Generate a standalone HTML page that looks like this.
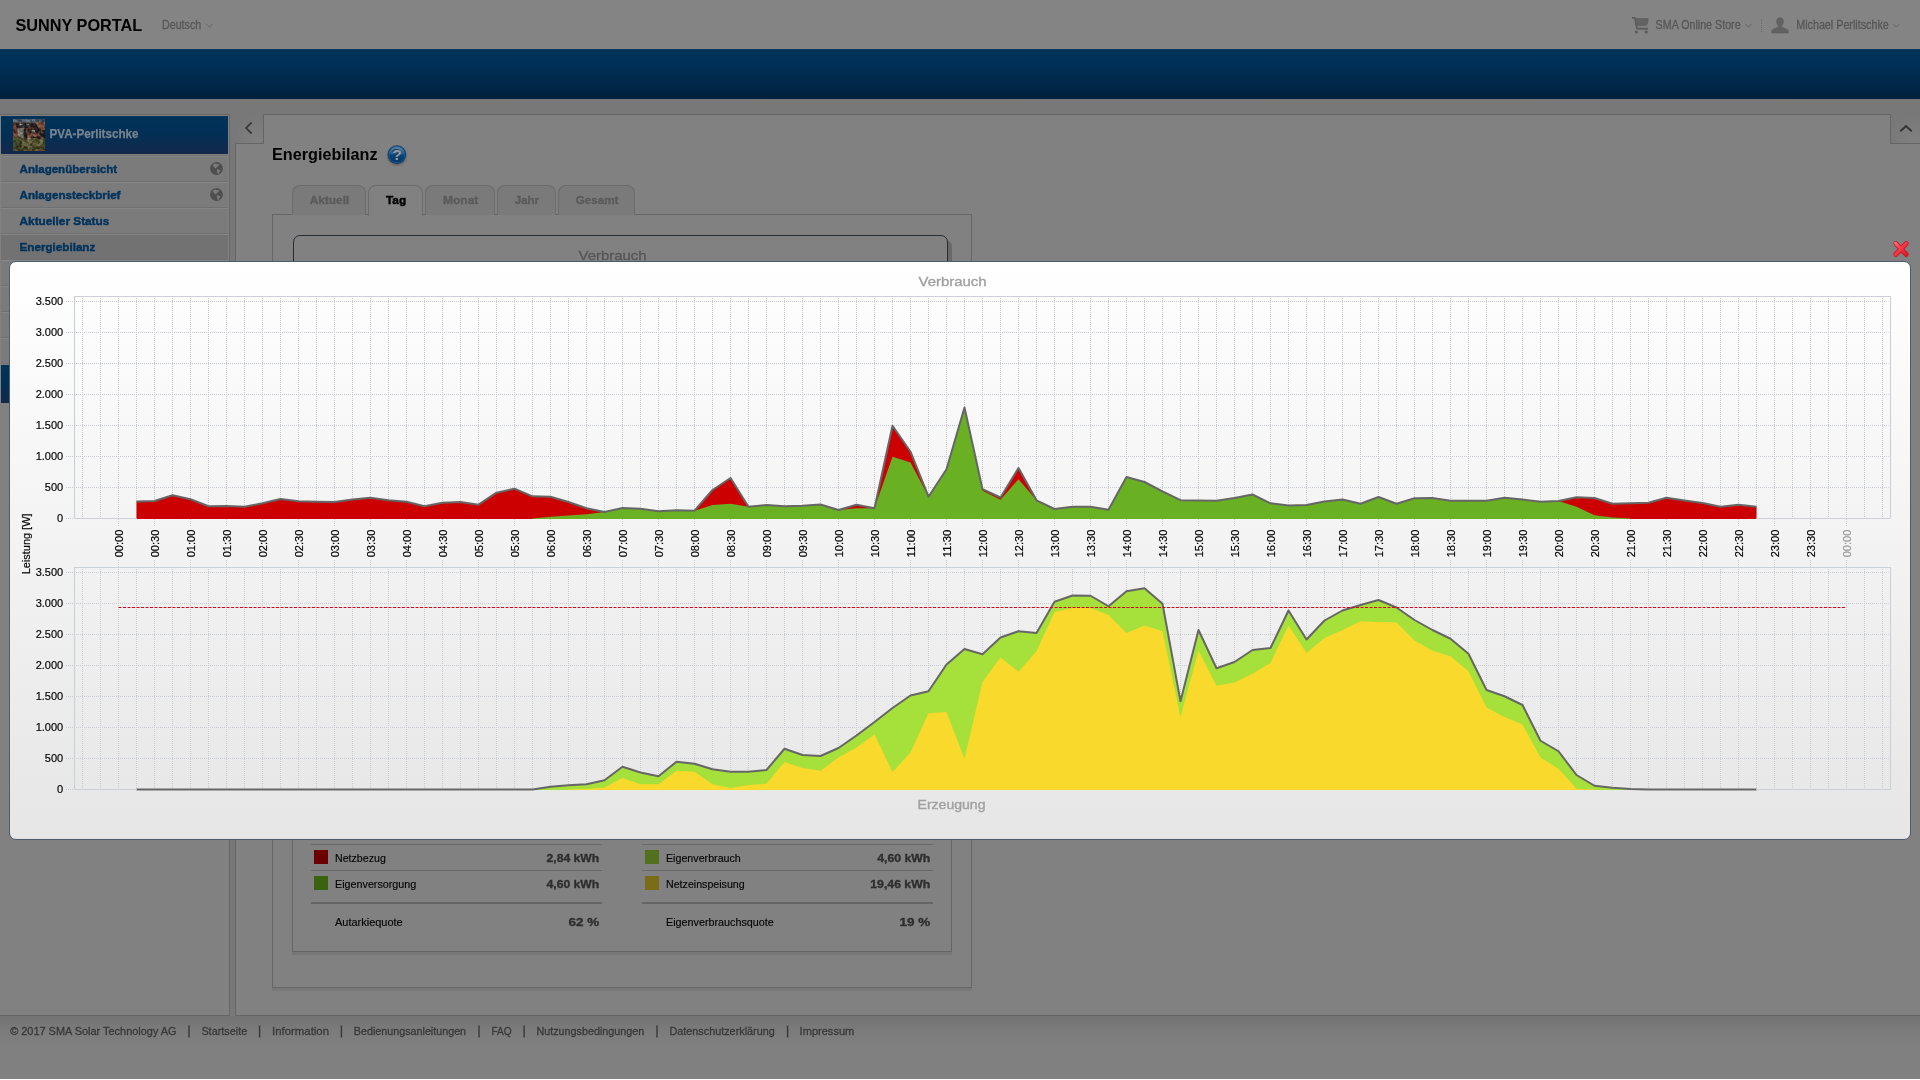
<!DOCTYPE html>
<html lang="de">
<head>
<meta charset="utf-8">
<title>Sunny Portal - Energiebilanz</title>
<style>
*{box-sizing:border-box;margin:0;padding:0}
html,body{width:1920px;height:1080px;overflow:hidden}
body{background:#787878;font-family:"Liberation Sans",sans-serif;font-size:12px;color:#000;position:relative}
.abs{position:absolute}
#hdr{left:0;top:0;width:1920px;height:49px;background:#848484}
#bar{left:0;top:49px;width:1920px;height:50px;background:linear-gradient(#00345b 0%,#003057 30%,#00213e 100%)}
#band{left:0;top:99px;width:1920px;height:15px;background:#787878}
#side{left:0;top:114px;width:230px;height:902px;background:#818181;border:1px solid #676767;border-left:none}
.sh{left:1px;width:227px;height:38px;background:linear-gradient(#003359 0%,#022f55 45%,#13294b 100%)}
.mi{left:1px;width:227px;height:26px;border-top:1px solid #868686;border-bottom:1px solid #707070;background:#7b7b7b}
.mi.sel{background:#727272}
#main{left:236px;top:114px;width:1690px;height:902px;background:#818181;border:1px solid #6b6b6b}
.tab{top:185px;height:30px;border:1px solid #6c6c6c;border-bottom:none;border-radius:8px 8px 0 0;background:#7a7a7a}
.tab.on{background:#818181;height:31px}
#box{left:272px;top:214px;width:700px;height:774px;border:1px solid #666;background:#818181;box-shadow:0 3px 0 #787878}
#inner{left:293px;top:235px;width:655px;height:60px;border:1.5px solid #262c32;border-radius:7px 7px 0 0;background:#818181}
#inner2{left:292px;top:800px;width:660px;height:152px;border:1px solid #666;border-top:none;box-shadow:0 3px 0 #777}
.ln{height:1px;background:#6a6a6a}
.ln2{height:2px;background:#656565}
.sq{width:14px;height:14px}
#foot{left:0;top:1016px;width:1920px;height:63px;background:linear-gradient(#737373 0,#7b7b7b 14px,#808080 30px)}
#wl{left:0;top:1079px;width:1920px;height:1px;background:#fff}
#modal{left:9px;top:261px;width:1902px;height:579px;border:1px solid #4f5d6b;border-radius:7px;background:linear-gradient(#ffffff,#e6e6e6)}
svg text{font-family:"Liberation Sans",sans-serif}
svg.txt{will-change:transform}
.grid{fill:none;stroke:#c7cdd3;stroke-width:1;stroke-dasharray:1,1}
.tk{font-size:11px;fill:#000;stroke:#000;stroke-width:0.18}
.tk.g{fill:#999;stroke:#999}
</style>
</head>
<body>
<div id="hdr" class="abs"></div>
<div id="bar" class="abs"></div>
<div id="band" class="abs"></div>

<!-- sidebar -->
<div id="side" class="abs"></div>
<div class="abs sh" style="top:116px"></div>
<svg class="abs" style="left:13px;top:119px" width="32" height="32" viewBox="0 0 32 32"><defs><filter id="bl" x="-5%" y="-5%" width="110%" height="110%"><feGaussianBlur stdDeviation="0.55"/></filter><clipPath id="tc"><rect width="32" height="32"/></clipPath><filter id="nz" x="0" y="0" width="100%" height="100%"><feTurbulence type="fractalNoise" baseFrequency="0.28" numOctaves="2" seed="7"/><feColorMatrix type="matrix" values="0 0 0 0 0  0 0 0 0 0  0 0 0 0 0  1.6 1.6 0 0 -1.25"/></filter><filter id="nz2" x="0" y="0" width="100%" height="100%"><feTurbulence type="fractalNoise" baseFrequency="0.33" numOctaves="2" seed="21"/><feColorMatrix type="matrix" values="0 0 0 0 0.75  0 0 0 0 0.72  0 0 0 0 0.55  0 1.7 1.7 0 -1.4"/></filter></defs>
<g clip-path="url(#tc)"><g filter="url(#bl)">
<rect x="-2" y="-2" width="36" height="36" fill="#6b3526"/>
<rect x="-2" y="-2" width="36" height="5.2" fill="#6b7e92"/>
<rect x="-2" y="2.8" width="36" height="1.3" fill="#5b4a44"/>
<path d="M22,4H34V13L28,15Z" fill="#78402b"/>
<path d="M-1,4H3L4,19H-1Z" fill="#733927"/>
<path d="M2.5,4H22.5L29.5,16L26,18L19.5,8.5L4,9.5Z" fill="#1c191c"/>
<path d="M6.5,4.8H9.5V6.3H6.5ZM13,4.8H16V5.8H13Z" fill="#9a9a9c"/>
<path d="M4.5,9.5L11,9L12,19H5.5Z" fill="#858680"/>
<path d="M6,10.5L10,10.2L10.4,13L6.3,13.4Z" fill="#6f7270"/>
<path d="M10.5,10L12.5,9.5L14,19L10.5,19.5Z" fill="#121214"/>
<path d="M13.5,9.5L20,9L23,14L25,17.5L14.5,18.5Z" fill="#553024"/>
<path d="M14.5,10L18.5,10L19.5,14L15,14.5Z" fill="#2c1612"/>
<path d="M18.8,11H22V13.2H19.4Z" fill="#a0a09e"/>
<path d="M14,15.5L26,14.5L27,18L14.5,19Z" fill="#70392a"/>
<path d="M29,11H34V19H30Z" fill="#180e0e"/>
<path d="M20,17.5L27,17L28,20L20,20Z" fill="#2a1a14"/>
<path d="M-2,19L6,18L13,19.5L20,19L27,20L34,19V34H-2Z" fill="#4a4a24"/>
<path d="M-2,22L5,20.5L10,23L6,27L-2,26Z" fill="#3c4020"/>
<path d="M9,21L16,20L21,23L19,28L11,27Z" fill="#66623a"/>
<path d="M14,19.2L22,19L22,20.2L14,20.4Z" fill="#8a8468"/>
<path d="M21,21L29,20.5L34,23V28L24,28Z" fill="#55522a"/>
<path d="M-2,27L8,26L16,29L26,27L34,29V34H-2Z" fill="#3e3e1e"/>
<path d="M14,31L34,29.5V34H10Z" fill="#6a4a22"/>
</g><g opacity="0.55"><rect width="32" height="32" filter="url(#nz)"/></g><g opacity="0.3"><rect y="3" width="32" height="29" filter="url(#nz2)"/></g></g></svg>
<div class="abs" style="left:1px;top:155px;width:227px;height:1px;background:#707070"></div>
<div class="abs mi" style="top:156px"></div>
<div class="abs mi" style="top:182px"></div>
<div class="abs mi" style="top:208px"></div>
<div class="abs mi sel" style="top:234px"></div>
<div class="abs mi" style="top:260px"></div>
<div class="abs mi" style="top:286px"></div>
<div class="abs mi" style="top:312px"></div>
<div class="abs mi" style="top:338px"></div>
<div class="abs sh" style="top:365px"></div>
<svg class="abs" style="left:210px;top:162px" width="13" height="13" viewBox="0 0 13 13"><circle cx="6.5" cy="6.5" r="6.4" fill="#4e4e4e"/><path d="M3.2,2.3C4.6,1.2 6.2,1.5 6.9,2.2C8,1.6 9.2,1.9 9.6,2.6C8.8,3.6 7.8,4.2 7,5C6.4,5.8 5.9,6.5 5.4,6.3C4.6,6 4.4,5 3.6,4.6C3,4.2 2.8,3.2 3.2,2.3ZM6.9,7.2C8,7 9.6,7.8 10.3,8.6C10.1,9.8 9.2,10.6 8.6,11.4C8.2,12 7.8,12.2 7.6,11.4C7.4,10.2 6.6,8.4 6.9,7.2ZM11,6.2C11.6,6.4 11.9,7 11.8,7.6C11.3,7.4 11,6.8 11,6.2Z" fill="#7b7b7b"/></svg>
<svg class="abs" style="left:210px;top:188px" width="13" height="13" viewBox="0 0 13 13"><circle cx="6.5" cy="6.5" r="6.4" fill="#4e4e4e"/><path d="M3.2,2.3C4.6,1.2 6.2,1.5 6.9,2.2C8,1.6 9.2,1.9 9.6,2.6C8.8,3.6 7.8,4.2 7,5C6.4,5.8 5.9,6.5 5.4,6.3C4.6,6 4.4,5 3.6,4.6C3,4.2 2.8,3.2 3.2,2.3ZM6.9,7.2C8,7 9.6,7.8 10.3,8.6C10.1,9.8 9.2,10.6 8.6,11.4C8.2,12 7.8,12.2 7.6,11.4C7.4,10.2 6.6,8.4 6.9,7.2ZM11,6.2C11.6,6.4 11.9,7 11.8,7.6C11.3,7.4 11,6.8 11,6.2Z" fill="#7b7b7b"/></svg>

<!-- main -->
<svg class="abs" style="left:0;top:0" width="1920" height="1080" viewBox="0 0 1920 1080"><defs><radialGradient id="ng" cx="0.8" cy="0.9" r="0.9"><stop offset="0" stop-color="#808080"/><stop offset="1" stop-color="#787878"/></radialGradient></defs>
<rect x="236" y="115" width="27" height="28" fill="url(#ng)"/><rect x="1891" y="115" width="29" height="28" fill="url(#ng)"/>
<path d="M263.5,114.5H1890.5V143.5H1925V1015.5H235.5V143.5H263.5Z" fill="#818181" stroke="#656565" stroke-width="1"/></svg>
<svg class="abs" style="left:243px;top:120px" width="12" height="16" viewBox="0 0 12 16"><path d="M8.6,2.4 L3.2,8 L8.6,13.6" fill="none" stroke="#383838" stroke-width="1.8"/></svg>
<svg class="abs" style="left:1899px;top:123px" width="14" height="10" viewBox="0 0 14 10"><path d="M1.3,8.2 L7,3 L12.7,8.2" fill="none" stroke="#333" stroke-width="1.9"/></svg>

<svg class="abs" style="left:385px;top:143px" width="24" height="25" viewBox="0 0 24 25"><defs><linearGradient id="hg" x1="0" y1="0" x2="0" y2="1"><stop offset="0" stop-color="#5c87a6"/><stop offset="0.48" stop-color="#1d5888"/><stop offset="0.52" stop-color="#04437a"/><stop offset="1" stop-color="#003768"/></linearGradient><filter id="hb"><feGaussianBlur stdDeviation="0.9"/></filter></defs>
<ellipse cx="11.9" cy="13.2" rx="9.2" ry="9" fill="#5a5a5a" filter="url(#hb)"/>
<circle cx="11.9" cy="11.6" r="9.3" fill="#0a3c72"/><circle cx="11.9" cy="11.6" r="8.1" fill="url(#hg)" stroke="#2c5e90" stroke-width="0.6"/>
<text x="11.6" y="16.9" text-anchor="middle" font-size="15.5" font-weight="bold" fill="#2a3848" transform="translate(-0.3,-0.6)">?</text>
<text x="11.9" y="17.3" text-anchor="middle" font-size="15.5" font-weight="bold" fill="#949aa2">?</text></svg>

<div id="box" class="abs"></div>
<div class="abs tab" style="left:292px;width:74px"></div>
<div class="abs tab on" style="left:368px;width:55px"></div>
<div class="abs tab" style="left:425px;width:70px"></div>
<div class="abs tab" style="left:497px;width:59px"></div>
<div class="abs tab" style="left:558px;width:77px"></div>
<div class="abs" style="left:948px;top:240px;width:4px;height:30px;background:#696969;clip-path:polygon(0 0,100% 4px,100% 100%,0 100%)"></div>
<div id="inner" class="abs"></div>
<div id="inner2" class="abs"></div>

<div class="abs ln" style="left:311px;top:844px;width:291px"></div>
<div class="abs ln" style="left:311px;top:870px;width:291px"></div>
<div class="abs ln2" style="left:311px;top:902px;width:291px"></div>
<div class="abs ln" style="left:642px;top:844px;width:291px"></div>
<div class="abs ln" style="left:642px;top:870px;width:291px"></div>
<div class="abs ln2" style="left:642px;top:902px;width:291px"></div>
<div class="abs sq" style="left:314px;top:850px;background:#6c0000"></div>
<div class="abs sq" style="left:314px;top:876px;background:#3a6310"></div>
<div class="abs sq" style="left:645px;top:850px;background:#52701d"></div>
<div class="abs sq" style="left:645px;top:876px;background:#7d6c17"></div>

<div id="foot" class="abs"></div>
<div id="wl" class="abs"></div>

<!-- header icons -->
<svg class="abs" style="left:204px;top:21px" width="12" height="9" viewBox="0 0 12 9"><path d="M2.2,2.8 L5.4,6.2 L8.6,2.8" fill="none" stroke="#666" stroke-width="1"/></svg>
<svg class="abs" style="left:1631px;top:15px" width="19" height="20" viewBox="0 0 19 20"><path d="M1,2.9H3.9L6,14" fill="none" stroke="#5b5b5b" stroke-width="1.7" stroke-linejoin="round"/><path d="M4.6,3.6H17.2L16.9,7.2Q16.4,10 14.6,10.6H6.2Z" fill="#626262" stroke="#5b5b5b" stroke-width="0.6"/><path d="M5.8,13.7H17.1" fill="none" stroke="#5b5b5b" stroke-width="1.9"/><circle cx="5.3" cy="17" r="1.55" fill="#5b5b5b"/><circle cx="15.2" cy="17" r="1.55" fill="#5b5b5b"/></svg>
<svg class="abs" style="left:1743px;top:21px" width="12" height="9" viewBox="0 0 12 9"><path d="M2.2,2.8 L5.4,6.2 L8.6,2.8" fill="none" stroke="#666" stroke-width="1"/></svg>
<div class="abs" style="left:1761px;top:19px;width:1px;height:13px;border-left:1px dotted #6a6a6a"></div>
<svg class="abs" style="left:1771px;top:17px" width="18" height="17" viewBox="0 0 18 17"><path d="M9,0.8C11.2,0.8 12.4,2.4 12.4,4.6C12.4,6.6 11.6,8 10.8,8.8V10.2C13,11 16.2,11.6 17.2,13.6V16H0.8V13.6C1.8,11.6 5,11 7.2,10.2V8.8C6.4,8 5.6,6.6 5.6,4.6C5.6,2.4 6.8,0.8 9,0.8Z" fill="#626262" stroke="#5a5a5a" stroke-width="0.5"/></svg>
<svg class="abs" style="left:1891px;top:21px" width="12" height="9" viewBox="0 0 12 9"><path d="M2.2,2.8 L5.4,6.2 L8.6,2.8" fill="none" stroke="#666" stroke-width="1"/></svg>

<svg class="abs txt" style="left:0;top:0" width="1920" height="1080" viewBox="0 0 1920 1080">
<text x="15.40" y="31.00" textLength="126.90" lengthAdjust="spacingAndGlyphs" font-size="16.5" font-weight="bold" fill="#000">SUNNY PORTAL</text>
<text x="162.00" y="29.00" textLength="39.20" lengthAdjust="spacingAndGlyphs" font-size="12" font-weight="normal" fill="#575757" stroke="#575757" stroke-width="0.3">Deutsch</text>
<text x="1655.60" y="29.00" textLength="85.00" lengthAdjust="spacingAndGlyphs" font-size="12" font-weight="normal" fill="#575757" stroke="#575757" stroke-width="0.3">SMA Online Store</text>
<text x="1796.20" y="29.00" textLength="92.60" lengthAdjust="spacingAndGlyphs" font-size="12" font-weight="normal" fill="#575757" stroke="#575757" stroke-width="0.3">Michael Perlitschke</text>
<text x="49.60" y="137.80" textLength="88.80" lengthAdjust="spacingAndGlyphs" font-size="12" font-weight="bold" fill="#78848f" stroke="#78848f" stroke-width="0.25">PVA-Perlitschke</text>
<text x="19.60" y="172.50" textLength="97.60" lengthAdjust="spacingAndGlyphs" font-size="11.3" font-weight="bold" fill="#00335d" stroke="#00335d" stroke-width="0.45">Anlagenübersicht</text>
<text x="19.60" y="198.50" textLength="100.90" lengthAdjust="spacingAndGlyphs" font-size="11.3" font-weight="bold" fill="#00335d" stroke="#00335d" stroke-width="0.45">Anlagensteckbrief</text>
<text x="19.60" y="224.50" textLength="89.70" lengthAdjust="spacingAndGlyphs" font-size="11.3" font-weight="bold" fill="#00335d" stroke="#00335d" stroke-width="0.45">Aktueller Status</text>
<text x="19.60" y="250.50" textLength="75.70" lengthAdjust="spacingAndGlyphs" font-size="11.3" font-weight="bold" fill="#00335d" stroke="#00335d" stroke-width="0.45">Energiebilanz</text>
<text x="272.00" y="160.00" textLength="105.50" lengthAdjust="spacingAndGlyphs" font-size="16.2" font-weight="bold" fill="#000">Energiebilanz</text>
<text x="309.70" y="204.00" textLength="39.60" lengthAdjust="spacingAndGlyphs" font-size="11.3" font-weight="bold" fill="#5a5a5a" stroke="#5a5a5a" stroke-width="0.3">Aktuell</text>
<text x="386.00" y="204.00" textLength="20.20" lengthAdjust="spacingAndGlyphs" font-size="11.3" font-weight="bold" fill="#000" stroke="#000" stroke-width="0.4">Tag</text>
<text x="443.00" y="204.00" textLength="35.30" lengthAdjust="spacingAndGlyphs" font-size="11.3" font-weight="bold" fill="#5a5a5a" stroke="#5a5a5a" stroke-width="0.3">Monat</text>
<text x="514.70" y="204.00" textLength="24.30" lengthAdjust="spacingAndGlyphs" font-size="11.3" font-weight="bold" fill="#5a5a5a" stroke="#5a5a5a" stroke-width="0.3">Jahr</text>
<text x="575.70" y="204.00" textLength="42.70" lengthAdjust="spacingAndGlyphs" font-size="11.3" font-weight="bold" fill="#5a5a5a" stroke="#5a5a5a" stroke-width="0.3">Gesamt</text>
<text x="578.50" y="259.80" textLength="68.00" lengthAdjust="spacingAndGlyphs" font-size="13" font-weight="normal" fill="#565656" stroke="#565656" stroke-width="0.3">Verbrauch</text>
<text x="335.00" y="862.00" textLength="50.80" lengthAdjust="spacingAndGlyphs" font-size="11.5" font-weight="normal" fill="#050505" stroke="#050505" stroke-width="0.15">Netzbezug</text>
<text x="546.50" y="862.00" textLength="52.80" lengthAdjust="spacingAndGlyphs" font-size="11.5" font-weight="bold" fill="#2e2e2e" stroke="#2e2e2e" stroke-width="0.35">2,84 kWh</text>
<text x="335.00" y="888.00" textLength="81.30" lengthAdjust="spacingAndGlyphs" font-size="11.5" font-weight="normal" fill="#050505" stroke="#050505" stroke-width="0.15">Eigenversorgung</text>
<text x="546.50" y="888.00" textLength="52.80" lengthAdjust="spacingAndGlyphs" font-size="11.5" font-weight="bold" fill="#2e2e2e" stroke="#2e2e2e" stroke-width="0.35">4,60 kWh</text>
<text x="335.00" y="926.00" textLength="67.70" lengthAdjust="spacingAndGlyphs" font-size="11.5" font-weight="normal" fill="#050505" stroke="#050505" stroke-width="0.15">Autarkiequote</text>
<text x="568.60" y="926.00" textLength="30.70" lengthAdjust="spacingAndGlyphs" font-size="11.5" font-weight="bold" fill="#2e2e2e" stroke="#2e2e2e" stroke-width="0.35">62 %</text>
<text x="666.00" y="862.00" textLength="74.80" lengthAdjust="spacingAndGlyphs" font-size="11.5" font-weight="normal" fill="#050505" stroke="#050505" stroke-width="0.15">Eigenverbrauch</text>
<text x="877.20" y="862.00" textLength="53.00" lengthAdjust="spacingAndGlyphs" font-size="11.5" font-weight="bold" fill="#2e2e2e" stroke="#2e2e2e" stroke-width="0.35">4,60 kWh</text>
<text x="666.00" y="888.00" textLength="78.70" lengthAdjust="spacingAndGlyphs" font-size="11.5" font-weight="normal" fill="#050505" stroke="#050505" stroke-width="0.15">Netzeinspeisung</text>
<text x="870.30" y="888.00" textLength="59.90" lengthAdjust="spacingAndGlyphs" font-size="11.5" font-weight="bold" fill="#2e2e2e" stroke="#2e2e2e" stroke-width="0.35">19,46 kWh</text>
<text x="666.00" y="926.00" textLength="107.80" lengthAdjust="spacingAndGlyphs" font-size="11.5" font-weight="normal" fill="#050505" stroke="#050505" stroke-width="0.15">Eigenverbrauchsquote</text>
<text x="899.50" y="926.00" textLength="30.70" lengthAdjust="spacingAndGlyphs" font-size="11.5" font-weight="bold" fill="#2e2e2e" stroke="#2e2e2e" stroke-width="0.35">19 %</text>
<text x="10.20" y="1035.00" textLength="166.40" lengthAdjust="spacingAndGlyphs" font-size="11.5" font-weight="normal" fill="#383838" stroke="#383838" stroke-width="0.3">© 2017 SMA Solar Technology AG</text>
<text x="201.40" y="1035.00" textLength="45.80" lengthAdjust="spacingAndGlyphs" font-size="11.5" font-weight="normal" fill="#383838" stroke="#383838" stroke-width="0.3">Startseite</text>
<text x="272.00" y="1035.00" textLength="57.00" lengthAdjust="spacingAndGlyphs" font-size="11.5" font-weight="normal" fill="#383838" stroke="#383838" stroke-width="0.3">Information</text>
<text x="353.80" y="1035.00" textLength="112.30" lengthAdjust="spacingAndGlyphs" font-size="11.5" font-weight="normal" fill="#383838" stroke="#383838" stroke-width="0.3">Bedienungsanleitungen</text>
<text x="491.40" y="1035.00" textLength="20.30" lengthAdjust="spacingAndGlyphs" font-size="11.5" font-weight="normal" fill="#383838" stroke="#383838" stroke-width="0.3">FAQ</text>
<text x="536.50" y="1035.00" textLength="107.70" lengthAdjust="spacingAndGlyphs" font-size="11.5" font-weight="normal" fill="#383838" stroke="#383838" stroke-width="0.3">Nutzungsbedingungen</text>
<text x="669.40" y="1035.00" textLength="105.40" lengthAdjust="spacingAndGlyphs" font-size="11.5" font-weight="normal" fill="#383838" stroke="#383838" stroke-width="0.3">Datenschutzerklärung</text>
<text x="799.60" y="1035.00" textLength="54.70" lengthAdjust="spacingAndGlyphs" font-size="11.5" font-weight="normal" fill="#383838" stroke="#383838" stroke-width="0.3">Impressum</text>
<path d="M189.0,1025.5V1037.5" stroke="#383838" stroke-width="1.4" fill="none"/>
<path d="M259.6,1025.5V1037.5" stroke="#383838" stroke-width="1.4" fill="none"/>
<path d="M341.4,1025.5V1037.5" stroke="#383838" stroke-width="1.4" fill="none"/>
<path d="M479.0,1025.5V1037.5" stroke="#383838" stroke-width="1.4" fill="none"/>
<path d="M524.1,1025.5V1037.5" stroke="#383838" stroke-width="1.4" fill="none"/>
<path d="M657.0,1025.5V1037.5" stroke="#383838" stroke-width="1.4" fill="none"/>
<path d="M787.6,1025.5V1037.5" stroke="#383838" stroke-width="1.4" fill="none"/>
</svg>

<!-- modal -->
<div id="modal" class="abs"></div>
<svg class="abs txt" style="left:0;top:0" width="1920" height="1080" viewBox="0 0 1920 1080">
<path d="M82.5,298.0V518.5M100.5,298.0V518.5M118.5,298.0V518.5M136.5,298.0V518.5M154.5,298.0V518.5M172.5,298.0V518.5M190.5,298.0V518.5M208.5,298.0V518.5M226.5,298.0V518.5M244.5,298.0V518.5M262.5,298.0V518.5M280.5,298.0V518.5M298.5,298.0V518.5M316.5,298.0V518.5M334.5,298.0V518.5M352.5,298.0V518.5M370.5,298.0V518.5M388.5,298.0V518.5M406.5,298.0V518.5M424.5,298.0V518.5M442.5,298.0V518.5M460.5,298.0V518.5M478.5,298.0V518.5M496.5,298.0V518.5M514.5,298.0V518.5M532.5,298.0V518.5M550.5,298.0V518.5M568.5,298.0V518.5M586.5,298.0V518.5M604.5,298.0V518.5M622.5,298.0V518.5M640.5,298.0V518.5M658.5,298.0V518.5M676.5,298.0V518.5M694.5,298.0V518.5M712.5,298.0V518.5M730.5,298.0V518.5M748.5,298.0V518.5M766.5,298.0V518.5M784.5,298.0V518.5M802.5,298.0V518.5M820.5,298.0V518.5M838.5,298.0V518.5M856.5,298.0V518.5M874.5,298.0V518.5M892.5,298.0V518.5M910.5,298.0V518.5M928.5,298.0V518.5M946.5,298.0V518.5M964.5,298.0V518.5M982.5,298.0V518.5M1000.5,298.0V518.5M1018.5,298.0V518.5M1036.5,298.0V518.5M1054.5,298.0V518.5M1072.5,298.0V518.5M1090.5,298.0V518.5M1108.5,298.0V518.5M1126.5,298.0V518.5M1144.5,298.0V518.5M1162.5,298.0V518.5M1180.5,298.0V518.5M1198.5,298.0V518.5M1216.5,298.0V518.5M1234.5,298.0V518.5M1252.5,298.0V518.5M1270.5,298.0V518.5M1288.5,298.0V518.5M1306.5,298.0V518.5M1324.5,298.0V518.5M1342.5,298.0V518.5M1360.5,298.0V518.5M1378.5,298.0V518.5M1396.5,298.0V518.5M1414.5,298.0V518.5M1432.5,298.0V518.5M1450.5,298.0V518.5M1468.5,298.0V518.5M1486.5,298.0V518.5M1504.5,298.0V518.5M1522.5,298.0V518.5M1540.5,298.0V518.5M1558.5,298.0V518.5M1576.5,298.0V518.5M1594.5,298.0V518.5M1612.5,298.0V518.5M1630.5,298.0V518.5M1648.5,298.0V518.5M1666.5,298.0V518.5M1684.5,298.0V518.5M1702.5,298.0V518.5M1720.5,298.0V518.5M1738.5,298.0V518.5M1756.5,298.0V518.5M1774.5,298.0V518.5M1792.5,298.0V518.5M1810.5,298.0V518.5M1828.5,298.0V518.5M1846.5,298.0V518.5M1864.5,298.0V518.5M1882.5,298.0V518.5" class="grid"/>
<path d="M66,487.5H73M76,487.5H1888.5M66,456.5H73M76,456.5H1888.5M66,425.5H73M76,425.5H1888.5M66,394.5H73M76,394.5H1888.5M66,363.5H73M76,363.5H1888.5M66,332.5H73M76,332.5H1888.5M66,301.5H73M76,301.5H1888.5" class="grid"/>
<path d="M66,518.5H73" class="grid"/>
<path d="M82.5,569.0V789.5M100.5,569.0V789.5M118.5,569.0V789.5M136.5,569.0V789.5M154.5,569.0V789.5M172.5,569.0V789.5M190.5,569.0V789.5M208.5,569.0V789.5M226.5,569.0V789.5M244.5,569.0V789.5M262.5,569.0V789.5M280.5,569.0V789.5M298.5,569.0V789.5M316.5,569.0V789.5M334.5,569.0V789.5M352.5,569.0V789.5M370.5,569.0V789.5M388.5,569.0V789.5M406.5,569.0V789.5M424.5,569.0V789.5M442.5,569.0V789.5M460.5,569.0V789.5M478.5,569.0V789.5M496.5,569.0V789.5M514.5,569.0V789.5M532.5,569.0V789.5M550.5,569.0V789.5M568.5,569.0V789.5M586.5,569.0V789.5M604.5,569.0V789.5M622.5,569.0V789.5M640.5,569.0V789.5M658.5,569.0V789.5M676.5,569.0V789.5M694.5,569.0V789.5M712.5,569.0V789.5M730.5,569.0V789.5M748.5,569.0V789.5M766.5,569.0V789.5M784.5,569.0V789.5M802.5,569.0V789.5M820.5,569.0V789.5M838.5,569.0V789.5M856.5,569.0V789.5M874.5,569.0V789.5M892.5,569.0V789.5M910.5,569.0V789.5M928.5,569.0V789.5M946.5,569.0V789.5M964.5,569.0V789.5M982.5,569.0V789.5M1000.5,569.0V789.5M1018.5,569.0V789.5M1036.5,569.0V789.5M1054.5,569.0V789.5M1072.5,569.0V789.5M1090.5,569.0V789.5M1108.5,569.0V789.5M1126.5,569.0V789.5M1144.5,569.0V789.5M1162.5,569.0V789.5M1180.5,569.0V789.5M1198.5,569.0V789.5M1216.5,569.0V789.5M1234.5,569.0V789.5M1252.5,569.0V789.5M1270.5,569.0V789.5M1288.5,569.0V789.5M1306.5,569.0V789.5M1324.5,569.0V789.5M1342.5,569.0V789.5M1360.5,569.0V789.5M1378.5,569.0V789.5M1396.5,569.0V789.5M1414.5,569.0V789.5M1432.5,569.0V789.5M1450.5,569.0V789.5M1468.5,569.0V789.5M1486.5,569.0V789.5M1504.5,569.0V789.5M1522.5,569.0V789.5M1540.5,569.0V789.5M1558.5,569.0V789.5M1576.5,569.0V789.5M1594.5,569.0V789.5M1612.5,569.0V789.5M1630.5,569.0V789.5M1648.5,569.0V789.5M1666.5,569.0V789.5M1684.5,569.0V789.5M1702.5,569.0V789.5M1720.5,569.0V789.5M1738.5,569.0V789.5M1756.5,569.0V789.5M1774.5,569.0V789.5M1792.5,569.0V789.5M1810.5,569.0V789.5M1828.5,569.0V789.5M1846.5,569.0V789.5M1864.5,569.0V789.5M1882.5,569.0V789.5" class="grid"/>
<path d="M66,758.5H73M76,758.5H1888.5M66,727.5H73M76,727.5H1888.5M66,696.5H73M76,696.5H1888.5M66,665.5H73M76,665.5H1888.5M66,634.5H73M76,634.5H1888.5M66,603.5H73M76,603.5H1888.5M66,572.5H73M76,572.5H1888.5" class="grid"/>
<path d="M66,789.5H73" class="grid"/>
<path d="M118.5,519V526M118.5,560V567M154.5,519V526M154.5,560V567M190.5,519V526M190.5,560V567M226.5,519V526M226.5,560V567M262.5,519V526M262.5,560V567M298.5,519V526M298.5,560V567M334.5,519V526M334.5,560V567M370.5,519V526M370.5,560V567M406.5,519V526M406.5,560V567M442.5,519V526M442.5,560V567M478.5,519V526M478.5,560V567M514.5,519V526M514.5,560V567M550.5,519V526M550.5,560V567M586.5,519V526M586.5,560V567M622.5,519V526M622.5,560V567M658.5,519V526M658.5,560V567M694.5,519V526M694.5,560V567M730.5,519V526M730.5,560V567M766.5,519V526M766.5,560V567M802.5,519V526M802.5,560V567M838.5,519V526M838.5,560V567M874.5,519V526M874.5,560V567M910.5,519V526M910.5,560V567M946.5,519V526M946.5,560V567M982.5,519V526M982.5,560V567M1018.5,519V526M1018.5,560V567M1054.5,519V526M1054.5,560V567M1090.5,519V526M1090.5,560V567M1126.5,519V526M1126.5,560V567M1162.5,519V526M1162.5,560V567M1198.5,519V526M1198.5,560V567M1234.5,519V526M1234.5,560V567M1270.5,519V526M1270.5,560V567M1306.5,519V526M1306.5,560V567M1342.5,519V526M1342.5,560V567M1378.5,519V526M1378.5,560V567M1414.5,519V526M1414.5,560V567M1450.5,519V526M1450.5,560V567M1486.5,519V526M1486.5,560V567M1522.5,519V526M1522.5,560V567M1558.5,519V526M1558.5,560V567M1594.5,519V526M1594.5,560V567M1630.5,519V526M1630.5,560V567M1666.5,519V526M1666.5,560V567M1702.5,519V526M1702.5,560V567M1738.5,519V526M1738.5,560V567M1774.5,519V526M1774.5,560V567M1810.5,519V526M1810.5,560V567M1846.5,519V526M1846.5,560V567" class="grid"/>
<path d="M136.5,519.0 L136.5,501.50 L154.5,501.00 L172.5,495.30 L190.5,499.30 L208.5,506.30 L226.5,506.00 L244.5,506.70 L262.5,503.30 L280.5,499.00 L298.5,501.30 L316.5,501.70 L334.5,502.00 L352.5,499.50 L370.5,497.70 L388.5,500.30 L406.5,501.70 L424.5,506.30 L442.5,502.70 L460.5,502.00 L478.5,504.70 L496.5,492.70 L514.5,488.70 L532.5,496.30 L550.5,496.70 L568.5,502.00 L586.5,508.30 L604.5,512.00 L622.5,508.00 L640.5,508.70 L658.5,511.30 L676.5,510.30 L694.5,510.70 L712.5,490.00 L730.5,478.00 L748.5,506.70 L766.5,505.00 L784.5,506.20 L802.5,505.80 L820.5,504.50 L838.5,510.00 L856.5,504.70 L874.5,508.30 L892.5,425.80 L910.5,451.70 L928.5,496.70 L946.5,469.20 L964.5,407.50 L982.5,489.20 L1000.5,497.50 L1018.5,468.00 L1036.5,500.30 L1054.5,509.00 L1072.5,506.70 L1090.5,506.80 L1108.5,509.70 L1126.5,477.00 L1144.5,482.00 L1162.5,491.30 L1180.5,500.20 L1198.5,500.50 L1216.5,500.80 L1234.5,498.00 L1252.5,494.50 L1270.5,503.30 L1288.5,505.50 L1306.5,505.00 L1324.5,501.50 L1342.5,499.50 L1360.5,503.70 L1378.5,497.00 L1396.5,503.70 L1414.5,498.30 L1432.5,498.00 L1450.5,500.70 L1468.5,500.70 L1486.5,500.70 L1504.5,497.70 L1522.5,499.50 L1540.5,501.70 L1558.5,501.00 L1576.5,497.30 L1594.5,498.00 L1612.5,503.70 L1630.5,503.30 L1648.5,502.80 L1666.5,497.80 L1684.5,500.50 L1702.5,503.00 L1720.5,506.70 L1738.5,504.70 L1756.5,506.70 L1756.5,519.0 Z" fill="#cc0000"/>
<path d="M532.5,519.0 L532.5,518.50 L550.5,516.70 L568.5,515.50 L586.5,514.30 L604.5,512.00 L622.5,508.00 L640.5,508.70 L658.5,511.30 L676.5,510.30 L694.5,510.70 L712.5,505.00 L730.5,503.70 L748.5,506.70 L766.5,505.00 L784.5,506.20 L802.5,505.80 L820.5,504.50 L838.5,510.00 L856.5,508.30 L874.5,508.30 L892.5,456.70 L910.5,462.50 L928.5,496.70 L946.5,469.20 L964.5,407.50 L982.5,490.80 L1000.5,499.70 L1018.5,479.20 L1036.5,500.30 L1054.5,509.00 L1072.5,506.70 L1090.5,506.80 L1108.5,509.70 L1126.5,477.00 L1144.5,482.00 L1162.5,491.30 L1180.5,500.20 L1198.5,500.50 L1216.5,500.80 L1234.5,498.00 L1252.5,494.50 L1270.5,503.30 L1288.5,505.50 L1306.5,505.00 L1324.5,501.50 L1342.5,499.50 L1360.5,503.70 L1378.5,497.00 L1396.5,503.70 L1414.5,498.30 L1432.5,498.00 L1450.5,500.70 L1468.5,500.70 L1486.5,500.70 L1504.5,497.70 L1522.5,499.50 L1540.5,501.70 L1558.5,501.00 L1576.5,506.70 L1594.5,515.30 L1612.5,517.50 L1630.5,518.50 L1630.5,519.0 Z" fill="#6ab023"/>
<path d="M136.5,501.50 L154.5,501.00 L172.5,495.30 L190.5,499.30 L208.5,506.30 L226.5,506.00 L244.5,506.70 L262.5,503.30 L280.5,499.00 L298.5,501.30 L316.5,501.70 L334.5,502.00 L352.5,499.50 L370.5,497.70 L388.5,500.30 L406.5,501.70 L424.5,506.30 L442.5,502.70 L460.5,502.00 L478.5,504.70 L496.5,492.70 L514.5,488.70 L532.5,496.30 L550.5,496.70 L568.5,502.00 L586.5,508.30 L604.5,512.00 L622.5,508.00 L640.5,508.70 L658.5,511.30 L676.5,510.30 L694.5,510.70 L712.5,490.00 L730.5,478.00 L748.5,506.70 L766.5,505.00 L784.5,506.20 L802.5,505.80 L820.5,504.50 L838.5,510.00 L856.5,504.70 L874.5,508.30 L892.5,425.80 L910.5,451.70 L928.5,496.70 L946.5,469.20 L964.5,407.50 L982.5,489.20 L1000.5,497.50 L1018.5,468.00 L1036.5,500.30 L1054.5,509.00 L1072.5,506.70 L1090.5,506.80 L1108.5,509.70 L1126.5,477.00 L1144.5,482.00 L1162.5,491.30 L1180.5,500.20 L1198.5,500.50 L1216.5,500.80 L1234.5,498.00 L1252.5,494.50 L1270.5,503.30 L1288.5,505.50 L1306.5,505.00 L1324.5,501.50 L1342.5,499.50 L1360.5,503.70 L1378.5,497.00 L1396.5,503.70 L1414.5,498.30 L1432.5,498.00 L1450.5,500.70 L1468.5,500.70 L1486.5,500.70 L1504.5,497.70 L1522.5,499.50 L1540.5,501.70 L1558.5,501.00 L1576.5,497.30 L1594.5,498.00 L1612.5,503.70 L1630.5,503.30 L1648.5,502.80 L1666.5,497.80 L1684.5,500.50 L1702.5,503.00 L1720.5,506.70 L1738.5,504.70 L1756.5,506.70" fill="none" stroke="#666" stroke-width="2" stroke-linejoin="round"/>
<path d="M532.5,790.0 L532.5,789.50 L550.5,786.70 L568.5,785.30 L586.5,784.20 L604.5,780.30 L622.5,766.70 L640.5,772.50 L658.5,776.30 L676.5,761.70 L694.5,763.70 L712.5,769.20 L730.5,771.70 L748.5,771.70 L766.5,770.00 L784.5,748.75 L802.5,755.00 L820.5,756.00 L838.5,748.00 L856.5,735.50 L874.5,722.00 L892.5,708.00 L910.5,695.50 L928.5,691.25 L946.5,664.50 L964.5,649.00 L982.5,654.25 L1000.5,637.50 L1018.5,631.25 L1036.5,633.00 L1054.5,601.75 L1072.5,595.50 L1090.5,595.75 L1108.5,606.25 L1126.5,591.25 L1144.5,588.25 L1162.5,603.75 L1180.5,701.25 L1198.5,630.00 L1216.5,668.25 L1234.5,662.00 L1252.5,650.00 L1270.5,648.00 L1288.5,610.50 L1306.5,639.50 L1324.5,620.50 L1342.5,610.50 L1360.5,605.00 L1378.5,600.00 L1396.5,607.50 L1414.5,620.00 L1432.5,630.00 L1450.5,638.75 L1468.5,653.75 L1486.5,690.00 L1504.5,696.25 L1522.5,705.00 L1540.5,740.75 L1558.5,751.25 L1576.5,775.00 L1594.5,785.75 L1612.5,787.75 L1630.5,789.00 L1648.5,789.50 L1648.5,790.0 Z" fill="#a6e03a"/>
<path d="M568.5,790.0 L568.5,789.50 L586.5,789.00 L604.5,787.50 L622.5,778.00 L640.5,784.20 L658.5,784.20 L676.5,770.80 L694.5,771.70 L712.5,784.20 L730.5,788.00 L748.5,785.00 L766.5,783.75 L784.5,762.00 L802.5,768.00 L820.5,770.75 L838.5,757.50 L856.5,747.50 L874.5,734.50 L892.5,772.00 L910.5,752.50 L928.5,713.25 L946.5,712.00 L964.5,758.75 L982.5,682.00 L1000.5,657.50 L1018.5,671.75 L1036.5,651.25 L1054.5,612.00 L1072.5,608.00 L1090.5,608.00 L1108.5,615.00 L1126.5,633.00 L1144.5,625.50 L1162.5,631.25 L1180.5,717.00 L1198.5,650.75 L1216.5,685.75 L1234.5,682.50 L1252.5,673.75 L1270.5,663.00 L1288.5,625.50 L1306.5,653.00 L1324.5,638.00 L1342.5,630.00 L1360.5,621.25 L1378.5,622.00 L1396.5,622.50 L1414.5,640.50 L1432.5,650.75 L1450.5,656.25 L1468.5,671.25 L1486.5,707.50 L1504.5,717.00 L1522.5,724.50 L1540.5,757.50 L1558.5,768.75 L1576.5,788.75 L1594.5,789.50 L1594.5,790.0 Z" fill="#fad92d"/>
<path d="M136.5,789.50 L154.5,789.50 L172.5,789.50 L190.5,789.50 L208.5,789.50 L226.5,789.50 L244.5,789.50 L262.5,789.50 L280.5,789.50 L298.5,789.50 L316.5,789.50 L334.5,789.50 L352.5,789.50 L370.5,789.50 L388.5,789.50 L406.5,789.50 L424.5,789.50 L442.5,789.50 L460.5,789.50 L478.5,789.50 L496.5,789.50 L514.5,789.50 L532.5,789.50 L550.5,786.70 L568.5,785.30 L586.5,784.20 L604.5,780.30 L622.5,766.70 L640.5,772.50 L658.5,776.30 L676.5,761.70 L694.5,763.70 L712.5,769.20 L730.5,771.70 L748.5,771.70 L766.5,770.00 L784.5,748.75 L802.5,755.00 L820.5,756.00 L838.5,748.00 L856.5,735.50 L874.5,722.00 L892.5,708.00 L910.5,695.50 L928.5,691.25 L946.5,664.50 L964.5,649.00 L982.5,654.25 L1000.5,637.50 L1018.5,631.25 L1036.5,633.00 L1054.5,601.75 L1072.5,595.50 L1090.5,595.75 L1108.5,606.25 L1126.5,591.25 L1144.5,588.25 L1162.5,603.75 L1180.5,701.25 L1198.5,630.00 L1216.5,668.25 L1234.5,662.00 L1252.5,650.00 L1270.5,648.00 L1288.5,610.50 L1306.5,639.50 L1324.5,620.50 L1342.5,610.50 L1360.5,605.00 L1378.5,600.00 L1396.5,607.50 L1414.5,620.00 L1432.5,630.00 L1450.5,638.75 L1468.5,653.75 L1486.5,690.00 L1504.5,696.25 L1522.5,705.00 L1540.5,740.75 L1558.5,751.25 L1576.5,775.00 L1594.5,785.75 L1612.5,787.75 L1630.5,789.00 L1648.5,789.50 L1666.5,789.50 L1684.5,789.50 L1702.5,789.50 L1720.5,789.50 L1738.5,789.50 L1756.5,789.50" fill="none" stroke="#666" stroke-width="2" stroke-linejoin="round"/>
<path d="M118.5,607.5H1846.5" stroke="#e2001a" stroke-width="1" stroke-dasharray="3,1.5" fill="none"/>
<path d="M74.5,518.5V296.5H1890.5V518.5" fill="none" stroke="#cbd1d7" stroke-width="1.15"/>
<path d="M74.5,789.5V567.5H1890.5V789.5" fill="none" stroke="#cbd1d7" stroke-width="1.15"/>
<path d="M74.5,518.5H136.5M1756.5,518.5H1890.5" fill="none" stroke="#cbd1d7" stroke-width="1.15"/>
<path d="M74.5,789.5H136.5M1756.5,789.5H1890.5" fill="none" stroke="#cbd1d7" stroke-width="1.15"/>
<text x="63.2" y="521.9" text-anchor="end" class="tk">0</text>
<text x="63.2" y="490.9" text-anchor="end" class="tk">500</text>
<text x="63.2" y="459.9" text-anchor="end" class="tk">1.000</text>
<text x="63.2" y="428.9" text-anchor="end" class="tk">1.500</text>
<text x="63.2" y="397.9" text-anchor="end" class="tk">2.000</text>
<text x="63.2" y="366.9" text-anchor="end" class="tk">2.500</text>
<text x="63.2" y="335.9" text-anchor="end" class="tk">3.000</text>
<text x="63.2" y="304.9" text-anchor="end" class="tk">3.500</text>
<text x="63.2" y="792.9" text-anchor="end" class="tk">0</text>
<text x="63.2" y="761.9" text-anchor="end" class="tk">500</text>
<text x="63.2" y="730.9" text-anchor="end" class="tk">1.000</text>
<text x="63.2" y="699.9" text-anchor="end" class="tk">1.500</text>
<text x="63.2" y="668.9" text-anchor="end" class="tk">2.000</text>
<text x="63.2" y="637.9" text-anchor="end" class="tk">2.500</text>
<text x="63.2" y="606.9" text-anchor="end" class="tk">3.000</text>
<text x="63.2" y="575.9" text-anchor="end" class="tk">3.500</text>
<text transform="translate(122.9,557.3) rotate(-90)" textLength="27.6" lengthAdjust="spacingAndGlyphs" class="tk">00:00</text>
<text transform="translate(158.9,557.3) rotate(-90)" textLength="27.6" lengthAdjust="spacingAndGlyphs" class="tk">00:30</text>
<text transform="translate(194.9,557.3) rotate(-90)" textLength="27.6" lengthAdjust="spacingAndGlyphs" class="tk">01:00</text>
<text transform="translate(230.9,557.3) rotate(-90)" textLength="27.6" lengthAdjust="spacingAndGlyphs" class="tk">01:30</text>
<text transform="translate(266.9,557.3) rotate(-90)" textLength="27.6" lengthAdjust="spacingAndGlyphs" class="tk">02:00</text>
<text transform="translate(302.9,557.3) rotate(-90)" textLength="27.6" lengthAdjust="spacingAndGlyphs" class="tk">02:30</text>
<text transform="translate(338.9,557.3) rotate(-90)" textLength="27.6" lengthAdjust="spacingAndGlyphs" class="tk">03:00</text>
<text transform="translate(374.9,557.3) rotate(-90)" textLength="27.6" lengthAdjust="spacingAndGlyphs" class="tk">03:30</text>
<text transform="translate(410.9,557.3) rotate(-90)" textLength="27.6" lengthAdjust="spacingAndGlyphs" class="tk">04:00</text>
<text transform="translate(446.9,557.3) rotate(-90)" textLength="27.6" lengthAdjust="spacingAndGlyphs" class="tk">04:30</text>
<text transform="translate(482.9,557.3) rotate(-90)" textLength="27.6" lengthAdjust="spacingAndGlyphs" class="tk">05:00</text>
<text transform="translate(518.9,557.3) rotate(-90)" textLength="27.6" lengthAdjust="spacingAndGlyphs" class="tk">05:30</text>
<text transform="translate(554.9,557.3) rotate(-90)" textLength="27.6" lengthAdjust="spacingAndGlyphs" class="tk">06:00</text>
<text transform="translate(590.9,557.3) rotate(-90)" textLength="27.6" lengthAdjust="spacingAndGlyphs" class="tk">06:30</text>
<text transform="translate(626.9,557.3) rotate(-90)" textLength="27.6" lengthAdjust="spacingAndGlyphs" class="tk">07:00</text>
<text transform="translate(662.9,557.3) rotate(-90)" textLength="27.6" lengthAdjust="spacingAndGlyphs" class="tk">07:30</text>
<text transform="translate(698.9,557.3) rotate(-90)" textLength="27.6" lengthAdjust="spacingAndGlyphs" class="tk">08:00</text>
<text transform="translate(734.9,557.3) rotate(-90)" textLength="27.6" lengthAdjust="spacingAndGlyphs" class="tk">08:30</text>
<text transform="translate(770.9,557.3) rotate(-90)" textLength="27.6" lengthAdjust="spacingAndGlyphs" class="tk">09:00</text>
<text transform="translate(806.9,557.3) rotate(-90)" textLength="27.6" lengthAdjust="spacingAndGlyphs" class="tk">09:30</text>
<text transform="translate(842.9,557.3) rotate(-90)" textLength="27.6" lengthAdjust="spacingAndGlyphs" class="tk">10:00</text>
<text transform="translate(878.9,557.3) rotate(-90)" textLength="27.6" lengthAdjust="spacingAndGlyphs" class="tk">10:30</text>
<text transform="translate(914.9,557.3) rotate(-90)" textLength="27.6" lengthAdjust="spacingAndGlyphs" class="tk">11:00</text>
<text transform="translate(950.9,557.3) rotate(-90)" textLength="27.6" lengthAdjust="spacingAndGlyphs" class="tk">11:30</text>
<text transform="translate(986.9,557.3) rotate(-90)" textLength="27.6" lengthAdjust="spacingAndGlyphs" class="tk">12:00</text>
<text transform="translate(1022.9,557.3) rotate(-90)" textLength="27.6" lengthAdjust="spacingAndGlyphs" class="tk">12:30</text>
<text transform="translate(1058.9,557.3) rotate(-90)" textLength="27.6" lengthAdjust="spacingAndGlyphs" class="tk">13:00</text>
<text transform="translate(1094.9,557.3) rotate(-90)" textLength="27.6" lengthAdjust="spacingAndGlyphs" class="tk">13:30</text>
<text transform="translate(1130.9,557.3) rotate(-90)" textLength="27.6" lengthAdjust="spacingAndGlyphs" class="tk">14:00</text>
<text transform="translate(1166.9,557.3) rotate(-90)" textLength="27.6" lengthAdjust="spacingAndGlyphs" class="tk">14:30</text>
<text transform="translate(1202.9,557.3) rotate(-90)" textLength="27.6" lengthAdjust="spacingAndGlyphs" class="tk">15:00</text>
<text transform="translate(1238.9,557.3) rotate(-90)" textLength="27.6" lengthAdjust="spacingAndGlyphs" class="tk">15:30</text>
<text transform="translate(1274.9,557.3) rotate(-90)" textLength="27.6" lengthAdjust="spacingAndGlyphs" class="tk">16:00</text>
<text transform="translate(1310.9,557.3) rotate(-90)" textLength="27.6" lengthAdjust="spacingAndGlyphs" class="tk">16:30</text>
<text transform="translate(1346.9,557.3) rotate(-90)" textLength="27.6" lengthAdjust="spacingAndGlyphs" class="tk">17:00</text>
<text transform="translate(1382.9,557.3) rotate(-90)" textLength="27.6" lengthAdjust="spacingAndGlyphs" class="tk">17:30</text>
<text transform="translate(1418.9,557.3) rotate(-90)" textLength="27.6" lengthAdjust="spacingAndGlyphs" class="tk">18:00</text>
<text transform="translate(1454.9,557.3) rotate(-90)" textLength="27.6" lengthAdjust="spacingAndGlyphs" class="tk">18:30</text>
<text transform="translate(1490.9,557.3) rotate(-90)" textLength="27.6" lengthAdjust="spacingAndGlyphs" class="tk">19:00</text>
<text transform="translate(1526.9,557.3) rotate(-90)" textLength="27.6" lengthAdjust="spacingAndGlyphs" class="tk">19:30</text>
<text transform="translate(1562.9,557.3) rotate(-90)" textLength="27.6" lengthAdjust="spacingAndGlyphs" class="tk">20:00</text>
<text transform="translate(1598.9,557.3) rotate(-90)" textLength="27.6" lengthAdjust="spacingAndGlyphs" class="tk">20:30</text>
<text transform="translate(1634.9,557.3) rotate(-90)" textLength="27.6" lengthAdjust="spacingAndGlyphs" class="tk">21:00</text>
<text transform="translate(1670.9,557.3) rotate(-90)" textLength="27.6" lengthAdjust="spacingAndGlyphs" class="tk">21:30</text>
<text transform="translate(1706.9,557.3) rotate(-90)" textLength="27.6" lengthAdjust="spacingAndGlyphs" class="tk">22:00</text>
<text transform="translate(1742.9,557.3) rotate(-90)" textLength="27.6" lengthAdjust="spacingAndGlyphs" class="tk">22:30</text>
<text transform="translate(1778.9,557.3) rotate(-90)" textLength="27.6" lengthAdjust="spacingAndGlyphs" class="tk">23:00</text>
<text transform="translate(1814.9,557.3) rotate(-90)" textLength="27.6" lengthAdjust="spacingAndGlyphs" class="tk">23:30</text>
<text transform="translate(1850.9,557.3) rotate(-90)" textLength="27.6" lengthAdjust="spacingAndGlyphs" class="tk g">00:00</text>
<text transform="translate(29.8,574.3) rotate(-90)" textLength="60.8" lengthAdjust="spacingAndGlyphs" class="tk">Leistung [W]</text>
<text x="918.50" y="286.00" textLength="68.00" lengthAdjust="spacingAndGlyphs" font-size="13" font-weight="normal" fill="#a0a0a0" stroke="#a0a0a0" stroke-width="0.35">Verbrauch</text>
<text x="917.50" y="809.00" textLength="68.00" lengthAdjust="spacingAndGlyphs" font-size="13" font-weight="normal" fill="#a0a0a0" stroke="#a0a0a0" stroke-width="0.35">Erzeugung</text>
</svg>
<!-- close -->
<svg class="abs" style="left:1892px;top:240px" width="18" height="18" viewBox="0 0 18 18"><defs><linearGradient id="xg" gradientUnits="userSpaceOnUse" x1="2" y1="2" x2="16" y2="16"><stop offset="0" stop-color="#ff7b84"/><stop offset="0.4" stop-color="#fb3f4d"/><stop offset="1" stop-color="#e01220"/></linearGradient></defs>
<path d="M3.7,3.5L14.3,14.5M14.3,3.5L3.7,14.5" stroke="#c91522" stroke-width="4.7" stroke-linecap="round" fill="none"/>
<path d="M3.7,3.5L14.3,14.5M14.3,3.5L3.7,14.5" stroke="url(#xg)" stroke-width="3.2" stroke-linecap="round" fill="none"/></svg>
</body>
</html>
